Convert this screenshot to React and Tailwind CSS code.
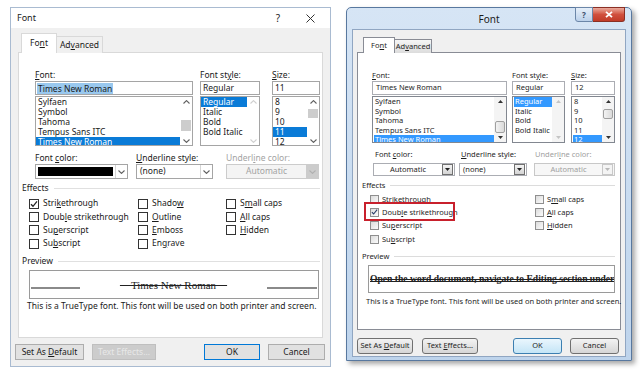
import React from "react";

const U = ({ children }) => (
  <span className="underline decoration-[0.7px] underline-offset-[1px]">{children}</span>
);

function ChevUp({ c = "#606060" }) {
  return (
    <svg width="7" height="4" viewBox="0 0 7 4">
      <path d="M0.5 3.5L3.5 0.6L6.5 3.5" fill="none" stroke={c} strokeWidth="1.1" />
    </svg>
  );
}
function ChevDown({ c = "#606060" }) {
  return (
    <svg width="7" height="4" viewBox="0 0 7 4">
      <path d="M0.5 0.5L3.5 3.4L6.5 0.5" fill="none" stroke={c} strokeWidth="1.1" />
    </svg>
  );
}
function TriUp({ c = "#333" }) {
  return (
    <svg width="5" height="3" viewBox="0 0 5 3">
      <path d="M0 3L2.5 0L5 3Z" fill={c} />
    </svg>
  );
}
function TriDown({ c = "#222" }) {
  return (
    <svg width="5" height="3" viewBox="0 0 5 3">
      <path d="M0 0L5 0L2.5 3Z" fill={c} />
    </svg>
  );
}
function Check({ c }) {
  return (
    <svg width="8" height="8" viewBox="0 0 8 8">
      <path d="M1 4.2L3 6.3L7 1.4" fill="none" stroke={c} strokeWidth="1.3" />
    </svg>
  );
}

/* ---------------- Windows 10 dialog ---------------- */

function L10List({ items, sel, thumb, disabled }) {
  return (
    <div className="mt-[1px] h-[50px] border border-[#a5a5a5] bg-white flex overflow-hidden">
      <div className="flex-1 min-w-0 flex flex-col">
        {items.map((it) => (
          <div
            key={it}
            className={
              it === sel
                ? "h-[10px] shrink-0 leading-[10px] px-[2px] bg-[#0a7bd7] text-white whitespace-nowrap"
                : "h-[10px] shrink-0 leading-[10px] px-[2px] whitespace-nowrap"
            }
          >
            {it}
          </div>
        ))}
      </div>
      <div className="w-[12px] shrink-0 flex flex-col items-center">
        <div className="h-[9px] shrink-0 flex items-center">
          <ChevUp c={disabled ? "#cfcfcf" : "#606060"} />
        </div>
        <div className="flex-1 w-full px-[1px]">{thumb}</div>
        <div className="h-[9px] shrink-0 flex items-center">
          <ChevDown c={disabled ? "#cfcfcf" : "#606060"} />
        </div>
      </div>
    </div>
  );
}

function Cb10({ label, checked }) {
  return (
    <div className="h-[13.33px] flex items-center">
      <div className="w-[10px] h-[10px] border border-[#333] bg-white flex items-center justify-center shrink-0">
        {checked && <Check c="#222" />}
      </div>
      <span className="ml-[4px] whitespace-nowrap">{label}</span>
    </div>
  );
}

function Btn10({ children, cls }) {
  return (
    <div
      className={
        "h-[16px] flex items-center justify-center border whitespace-nowrap " + cls
      }
    >
      <span>{children}</span>
    </div>
  );
}

function LeftDialog() {
  const lbl = "h-[10px] leading-[10px] whitespace-nowrap";
  return (
    <div className="mt-[7px] ml-[10px] w-[321px] h-[360px] shrink-0 border border-[#a9bbd1] bg-[#f0f0f0] flex flex-col text-[8.5px] text-[#1a1a1a] font-['Noto_Sans',sans-serif]">
      {/* title */}
      <div className="h-[20px] shrink-0 bg-white flex items-center">
        <span className="ml-[6px] text-[9px]">Font</span>
        <span className="ml-auto w-[10px] text-center text-[10px] text-[#222]">?</span>
        <svg className="ml-[23px] mr-[15px]" width="9" height="9" viewBox="0 0 9 9">
          <path d="M0.5 0.5L8.5 8.5M8.5 0.5L0.5 8.5" stroke="#333" strokeWidth="1" />
        </svg>
      </div>
      {/* tabs */}
      <div className="mt-[5px] pl-[10px] h-[20px] flex items-end relative z-10 -mb-px">
        <div className="w-[36px] h-[20px] bg-white border border-b-0 border-[#d9d9d9] flex items-center justify-center">
          <span>Fo<U>n</U>t</span>
        </div>
        <div className="w-[46px] h-[17px] border border-b-0 border-l-0 border-[#d9d9d9] bg-[#f0f0f0] flex items-center justify-center">
          <span>Ad<U>v</U>anced</span>
        </div>
      </div>
      {/* panel */}
      <div className="ml-[7px] w-[305px] h-[286px] shrink-0 bg-white border border-[#d9d9d9] flex flex-col">
        <div className="mt-[17px] pl-[16px] flex">
          <div className="w-[158px] flex flex-col">
            <div className={lbl}>
              <U>F</U>ont:
            </div>
            <div className="mt-[1px] h-[14px] border border-[#a5a5a5] flex items-center px-[1px]">
              <span className="bg-[#99c8ee] px-[1px] leading-[11px]">Times New Roman</span>
            </div>
            <L10List
              items={["Sylfaen", "Symbol", "Tahoma", "Tempus Sans ITC", "Times New Roman"]}
              sel="Times New Roman"
              thumb={<div className="mt-[14px] h-[11px] bg-[#cdcdcd]" />}
            />
          </div>
          <div className="ml-[7px] w-[60px] flex flex-col">
            <div className={lbl}>
              Font st<U>y</U>le:
            </div>
            <div className="mt-[1px] h-[14px] border border-[#a5a5a5] flex items-center px-[2px]">Regular</div>
            <L10List items={["Regular", "Italic", "Bold", "Bold Italic"]} sel="Regular" disabled />
          </div>
          <div className="ml-[12px] w-[48px] flex flex-col">
            <div className={lbl}>
              <U>S</U>ize:
            </div>
            <div className="mt-[1px] h-[14px] border border-[#a5a5a5] flex items-center px-[2px]">11</div>
            <L10List
              items={["8", "9", "10", "11", "12"]}
              sel="11"
              thumb={<div className="mt-[3px] h-[9px] bg-[#cdcdcd]" />}
            />
          </div>
        </div>

        {/* colour row */}
        <div className="mt-[7px] pl-[16px] flex">
          <div className="w-[93px] flex flex-col">
            <div className={lbl}>
              Font <U>c</U>olor:
            </div>
            <div className="mt-[1px] h-[15px] border border-[#a5a5a5] flex">
              <div className="flex-1 p-[2px]">
                <div className="h-full bg-black" />
              </div>
              <div className="w-[12px] border-l border-[#d6d6d6] flex items-center justify-center">
                <ChevDown />
              </div>
            </div>
          </div>
          <div className="ml-[8px] w-[77px] flex flex-col">
            <div className={lbl}>
              <U>U</U>nderline style:
            </div>
            <div className="mt-[1px] h-[15px] border border-[#a5a5a5] flex">
              <div className="flex-1 flex items-center pl-[3px]">(none)</div>
              <div className="w-[12px] border-l border-[#d6d6d6] flex items-center justify-center">
                <ChevDown />
              </div>
            </div>
          </div>
          <div className="ml-[13px] w-[93px] flex flex-col text-[#a3a3a3]">
            <div className={lbl}>
              Underl<U>i</U>ne color:
            </div>
            <div className="mt-[1px] h-[15px] border border-[#cccccc] bg-[#f4f4f4] flex">
              <div className="flex-1 flex items-center justify-center">Automatic</div>
              <div className="w-[12px] bg-[#cccccc] flex items-center justify-center">
                <ChevDown c="#b0b0b0" />
              </div>
            </div>
          </div>
        </div>

        {/* effects */}
        <div className="mt-[4px] h-[10px] pl-[3px] pr-[2px] flex items-center">
          <span className="leading-[10px]">Effects</span>
          <div className="ml-[5px] flex-1 h-px bg-[#e0e0e0]" />
        </div>
        <div className="mt-[4px] pl-[10px] grid grid-cols-[109px_88px_1fr]">
          <div className="flex flex-col">
            <Cb10 label={<>Stri<U>k</U>ethrough</>} checked />
            <Cb10 label={<>Doub<U>l</U>e strikethrough</>} />
            <Cb10 label={<>Su<U>p</U>erscript</>} />
            <Cb10 label={<>Su<U>b</U>script</>} />
          </div>
          <div className="flex flex-col">
            <Cb10 label={<>Shado<U>w</U></>} />
            <Cb10 label={<><U>O</U>utline</>} />
            <Cb10 label={<><U>E</U>mboss</>} />
            <Cb10 label={<>En<U>g</U>rave</>} />
          </div>
          <div className="flex flex-col">
            <Cb10 label={<>S<U>m</U>all caps</>} />
            <Cb10 label={<><U>A</U>ll caps</>} />
            <Cb10 label={<><U>H</U>idden</>} />
          </div>
        </div>

        {/* preview */}
        <div className="mt-[6px] h-[10px] pl-[3px] pr-[2px] flex items-center">
          <span className="leading-[10px]">Preview</span>
          <div className="ml-[5px] flex-1 h-px bg-[#e0e0e0]" />
        </div>
        <div className="mt-[4px] ml-[10px] w-[290px] h-[29px] border border-[#9a9a9a] flex items-start px-[1px] pt-[8px]">
          <div className="mt-[8px] w-[49px] h-[1.5px] bg-[#8a8a8a]" />
          <div className="flex-1 text-center text-[11px] leading-[12px] font-['Liberation_Serif',serif] text-[#222]">
            <span className="line-through decoration-[1px]">{"\u00a0\u00a0\u00a0\u00a0Times New Roman\u00a0\u00a0\u00a0\u00a0"}</span>
          </div>
          <div className="mt-[8px] w-[50px] h-[1.5px] bg-[#8a8a8a]" />
        </div>
        <div className="mt-[2px] pl-[8px] h-[10px] leading-[10px] whitespace-nowrap">
          This is a TrueType font. This font will be used on both printer and screen.
        </div>
      </div>

      {/* buttons */}
      <div className="mt-[6px] h-[16px] pl-[4px] pr-[5px] flex">
        <Btn10 cls="w-[69px] bg-[#e1e1e1] border-[#adadad]">
          Set As <U>D</U>efault
        </Btn10>
        <Btn10 cls="ml-[8px] w-[64px] bg-[#cccccc] border-[#bfbfbf] text-[#e8e8e8]">Text Effects...</Btn10>
        <Btn10 cls="ml-auto w-[56px] bg-[#e1e1e1] border-[#0078d7] border-[1.5px]">OK</Btn10>
        <Btn10 cls="ml-[8px] w-[57px] bg-[#e1e1e1] border-[#adadad]">Cancel</Btn10>
      </div>
    </div>
  );
}

/* ---------------- Windows 7 dialog ---------------- */

function L7List({ items, sel, thumb, disabled }) {
  return (
    <div className="mt-[1px] h-[47px] border border-[#828790] bg-white flex overflow-hidden">
      <div className="flex-1 min-w-0 flex flex-col pl-[1px]">
        {items.map((it) => (
          <div
            key={it}
            className={
              it === sel
                ? "h-[9.5px] shrink-0 leading-[9.5px] px-[1px] bg-[#3399ff] text-white whitespace-nowrap"
                : "h-[9.5px] shrink-0 leading-[9.5px] px-[1px] whitespace-nowrap"
            }
          >
            {it}
          </div>
        ))}
      </div>
      <div className="w-[12px] shrink-0 bg-[#f4f4f4] flex flex-col items-center">
        <div className="h-[9px] shrink-0 flex items-center">
          <TriUp c={disabled ? "#c4c4c4" : "#333"} />
        </div>
        <div className="flex-1 w-full px-[1px]">{thumb}</div>
        <div className="h-[9px] shrink-0 flex items-center">
          <TriDown c={disabled ? "#c4c4c4" : "#333"} />
        </div>
      </div>
    </div>
  );
}

function Cb7({ label, checked }) {
  return (
    <div className="h-[13.33px] flex items-center">
      <div className="w-[9px] h-[9px] border border-[#8f8f8f] bg-linear-to-br from-[#dcdcdc] to-[#fbfbfb] flex items-center justify-center shrink-0">
        {checked && <Check c="#2a3f6a" />}
      </div>
      <span className="ml-[3px] whitespace-nowrap">{label}</span>
    </div>
  );
}

function Btn7({ children, cls }) {
  return (
    <div
      className={
        "h-[16px] rounded-[3px] border flex items-center justify-center whitespace-nowrap " + cls
      }
    >
      <span>{children}</span>
    </div>
  );
}

function RightDialog() {
  const lbl = "h-[9px] leading-[9px] whitespace-nowrap";
  return (
    <div className="mt-[7px] ml-[15px] w-[286px] h-[354px] shrink-0 rounded-t-[5px] border border-[#58789f] bg-linear-to-b from-[#d6e5f5] to-[#bed4ec] shadow-[3px_3px_5px_rgba(0,0,0,0.35)] flex flex-col px-[5px] pb-[3px] text-[7.5px] text-[#1e1e1e] font-['Noto_Sans',sans-serif]">
      {/* title bar */}
      <div className="h-[21px] shrink-0 grid grid-cols-[1fr_auto_1fr]">
        <div />
        <div className="pt-[5px] text-[10px] leading-[12px] text-[#1b1b1b]">Font</div>
        <div className="flex justify-end items-start -mt-px mr-[1px]">
          <div className="w-[18px] h-[15px] rounded-bl-[3px] border border-[#6b86a8] bg-linear-to-b from-[#e6eff9] to-[#bcd1ea] flex items-center justify-center text-[8px] text-[#3b4f6a] font-bold">
            ?
          </div>
          <div className="w-[32px] h-[15px] rounded-br-[3px] border border-l-0 border-[#8a2f24] bg-linear-to-b from-[#e9a99c] via-[#d0503e] to-[#c13b28] flex items-center justify-center">
            <svg width="8" height="7" viewBox="0 0 8 7">
              <path d="M1 0.8L7 6.2M7 0.8L1 6.2" stroke="#fff" strokeWidth="1.8" />
            </svg>
          </div>
        </div>
      </div>
      {/* client */}
      <div className="flex-1 bg-[#f0f0f0] border border-[#90a6c2] flex flex-col">
        <div className="mt-[7px] pl-[10px] h-[16px] flex items-end relative z-10 -mb-px">
          <div className="w-[32px] h-[16px] bg-white border border-b-0 border-[#898c95] flex items-center justify-center">
            <span>Fo<U>n</U>t</span>
          </div>
          <div className="w-[37px] h-[14px] border border-b-0 border-l-0 border-[#898c95] bg-linear-to-b from-[#f6f6f6] to-[#dcdcdc] flex items-center justify-center">
            <span>Ad<U>v</U>anced</span>
          </div>
        </div>
        <div className="ml-[4px] w-[264px] h-[278px] shrink-0 bg-white border border-[#898c95] flex flex-col">
          <div className="mt-[18px] pl-[14px] flex">
            <div className="w-[135px] flex flex-col">
              <div className={lbl}>
                <U>F</U>ont:
              </div>
              <div className="mt-[1px] h-[14px] border border-[#abadb3] flex items-center px-[3px]">Times New Roman</div>
              <L7List
                items={["Sylfaen", "Symbol", "Tahoma", "Tempus Sans ITC", "Times New Roman"]}
                sel="Times New Roman"
                thumb={<div className="mt-[15px] h-[12px] border border-[#a0a0a0] rounded-[2px] bg-linear-to-r from-[#f3f3f3] to-[#dadada]" />}
              />
            </div>
            <div className="ml-[5px] w-[53px] flex flex-col">
              <div className={lbl}>
                Font st<U>y</U>le:
              </div>
              <div className="mt-[1px] h-[14px] border border-[#abadb3] flex items-center px-[3px]">Regular</div>
              <L7List items={["Regular", "Italic", "Bold", "Bold Italic"]} sel="Regular" disabled />
            </div>
            <div className="ml-[6px] w-[44px] flex flex-col">
              <div className={lbl}>
                <U>S</U>ize:
              </div>
              <div className="mt-[1px] h-[14px] border border-[#abadb3] flex items-center px-[3px]">12</div>
              <L7List
                items={["8", "9", "10", "11", "12"]}
                sel="12"
                thumb={<div className="mt-[3px] h-[10px] border border-[#a0a0a0] rounded-[2px] bg-linear-to-r from-[#f3f3f3] to-[#dadada]" />}
              />
            </div>
          </div>

          {/* colour row */}
          <div className="mt-[7px] pl-[15px] flex">
            <div className="w-[82px] flex flex-col">
              <div className={"pl-[2px] " + lbl}>
                Font <U>c</U>olor:
              </div>
              <div className="mt-[4px] h-[13px] border border-[#abadb3] bg-white flex items-center">
                <div className="flex-1 text-center">Automatic</div>
                <div className="mr-[1px] w-[11px] h-[11px] border border-[#707070] bg-linear-to-b from-[#f4f4f4] to-[#d4d4d4] flex items-center justify-center">
                  <TriDown />
                </div>
              </div>
            </div>
            <div className="ml-[4px] w-[68px] flex flex-col">
              <div className={"pl-[2px] " + lbl}>
                <U>U</U>nderline style:
              </div>
              <div className="mt-[4px] h-[13px] border border-[#abadb3] bg-white flex items-center">
                <div className="flex-1 pl-[3px]">(none)</div>
                <div className="mr-[1px] w-[11px] h-[11px] border border-[#707070] bg-linear-to-b from-[#f4f4f4] to-[#d4d4d4] flex items-center justify-center">
                  <TriDown />
                </div>
              </div>
            </div>
            <div className="ml-[7px] w-[81px] flex flex-col text-[#a0a0a0]">
              <div className={"pl-[1px] " + lbl}>
                Underl<U>i</U>ne color:
              </div>
              <div className="mt-[4px] h-[13px] border border-[#c8c8c8] bg-[#f7f7f7] flex items-center">
                <div className="flex-1 text-center">Automatic</div>
                <div className="mr-[1px] w-[11px] h-[11px] border border-[#c8c8c8] bg-[#f4f4f4] flex items-center justify-center">
                  <TriDown c="#b8b8b8" />
                </div>
              </div>
            </div>
          </div>

          {/* effects */}
          <div className="mt-[5px] h-[9px] pl-[4px] pr-[5px] flex items-center">
            <span className="leading-[9px]">Effects</span>
            <div className="ml-[5px] flex-1 h-px bg-[#dcdcdc]" />
          </div>
          <div className="mt-[2.5px] pl-[12px] grid grid-cols-[165px_1fr]">
            <div className="flex flex-col">
              <Cb7 label={<>Stri<U>k</U>ethrough</>} />
              <div className="relative">
                <Cb7 label={<>Doub<U>l</U>e strikethrough</>} checked />
                <div className="absolute -left-[6px] -top-[4px] w-[91px] h-[19px] border-[2.5px] border-[#c8202c]" />
              </div>
              <Cb7 label={<>Su<U>p</U>erscript</>} />
              <Cb7 label={<>Su<U>b</U>script</>} />
            </div>
            <div className="flex flex-col">
              <Cb7 label={<>S<U>m</U>all caps</>} />
              <Cb7 label={<><U>A</U>ll caps</>} />
              <Cb7 label={<><U>H</U>idden</>} />
            </div>
          </div>

          {/* preview */}
          <div className="mt-[6px] h-[9px] pl-[4px] pr-[5px] flex items-center">
            <span className="leading-[9px]">Preview</span>
            <div className="ml-[5px] flex-1 h-px bg-[#dcdcdc]" />
          </div>
          <div className="mt-[4px] ml-[10px] w-[247px] h-[28px] border border-[#9a9a9a] flex items-center overflow-hidden pl-[1px]">
            <span className="whitespace-nowrap text-[9.6px] leading-[12px] font-bold font-['Liberation_Serif',serif] text-[#222] line-through decoration-double decoration-[1px]">
              Open the word document, navigate to Editing section under
            </span>
          </div>
          <div className="mt-[4px] pl-[8px] h-[9px] leading-[9px] whitespace-nowrap">
            This is a TrueType font. This font will be used on both printer and screen.
          </div>
        </div>

        {/* buttons */}
        <div className="mt-[8px] h-[16px] pl-[4px] pr-[6px] flex">
          <Btn7 cls="w-[56px] border-[#707070] bg-linear-to-b from-[#f3f3f3] to-[#d6d6d6]">
            Set As <U>D</U>efault
          </Btn7>
          <Btn7 cls="ml-[9px] w-[56px] border-[#707070] bg-linear-to-b from-[#f3f3f3] to-[#d6d6d6]">
            Text <U>E</U>ffects...
          </Btn7>
          <Btn7 cls="ml-auto w-[49px] border-[#3c7fb1] bg-linear-to-b from-[#eaf6fd] to-[#c4e5f6]">OK</Btn7>
          <Btn7 cls="ml-[8px] w-[49px] border-[#707070] bg-linear-to-b from-[#f3f3f3] to-[#d6d6d6]">Cancel</Btn7>
        </div>
      </div>
    </div>
  );
}

export default function App() {
  return (
    <div className="w-[640px] h-[377px] bg-white overflow-hidden flex items-start">
      <LeftDialog />
      <RightDialog />
    </div>
  );
}
